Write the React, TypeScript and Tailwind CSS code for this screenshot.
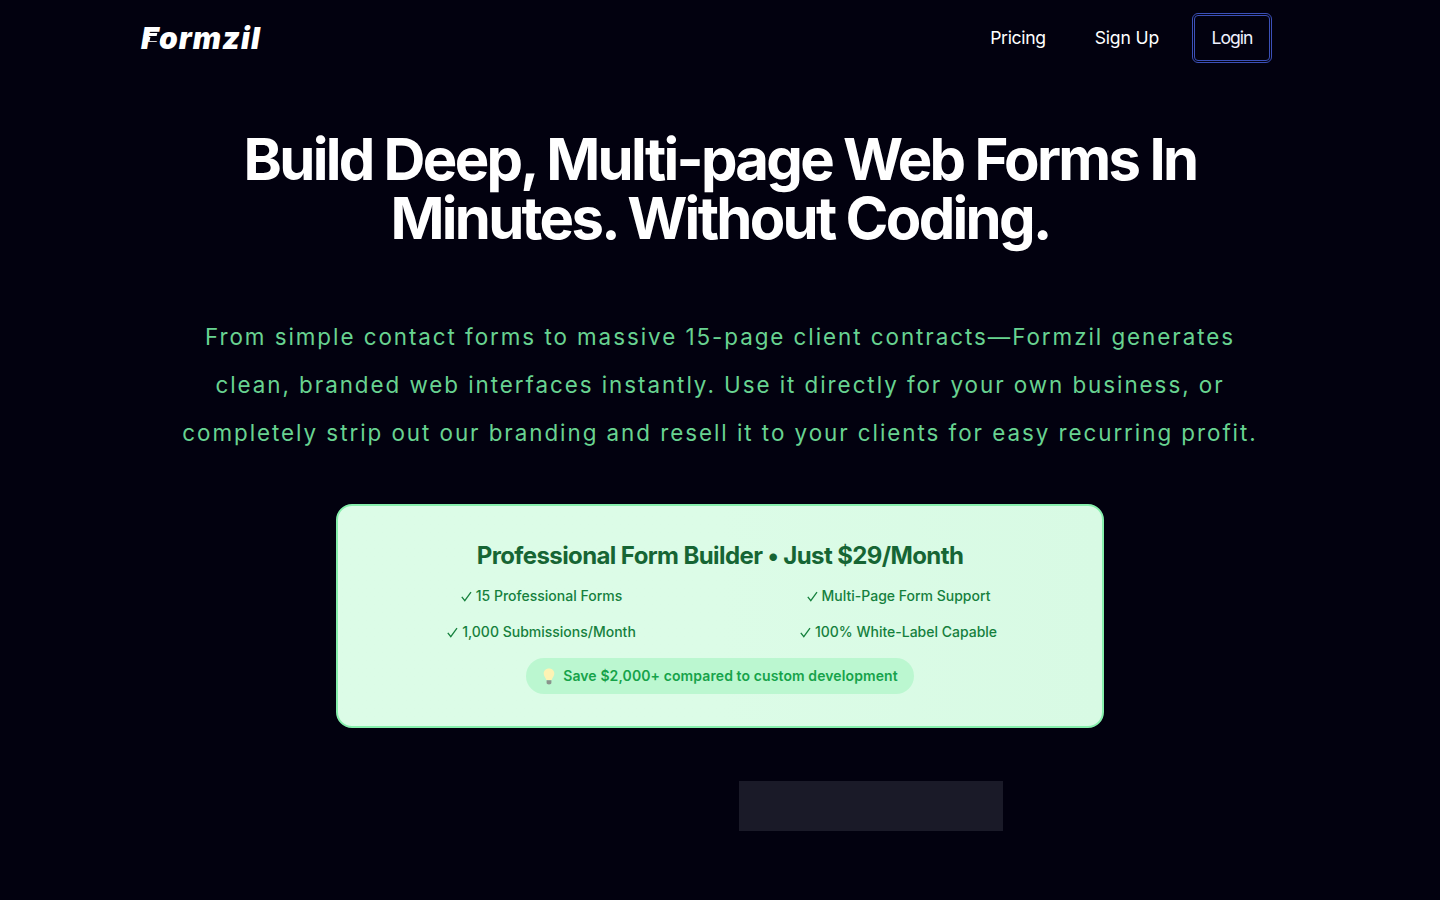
const features = [
  "15 Professional Forms",
  "Multi-Page Form Support",
  "1,000 Submissions/Month",
  "100% White-Label Capable",
];

function Check() {
  return (
    <svg width="11" height="11" viewBox="0 0 11 11" className="mr-1 shrink-0" fill="none" stroke="currentColor" strokeWidth="1.3">
      <path d="M.8 5.8 3.8 9.6 10 1.2" />
    </svg>
  );
}

function Bulb() {
  return (
    <svg width="14" height="17" viewBox="0 0 14 17" className="shrink-0">
      <path d="M7 .5C3.9.5 1.7 2.8 1.7 5.6c0 2.5 1.9 3.8 2.6 6.4h5.4c.7-2.6 2.6-3.9 2.6-6.4C12.3 2.8 10.1.5 7 .5z" fill="#fdf3b4" />
      <path d="M4.6 12.2h4.8v2.6c0 1.1-1 1.7-2.4 1.7s-2.4-.6-2.4-1.7z" fill="#8a948c" />
    </svg>
  );
}

export default function App() {
  return (
    <div className="min-h-[900px] bg-[#02010f] font-['Inter',sans-serif] text-white">
      <header className="ml-[141px] flex w-[1131px] items-center justify-between pt-[13px]">
        <a href="#" className="relative text-[30px] leading-[50px] font-black tracking-[1.05px] italic">
          Formzil
          {/* speed line through the F */}
          <span className="absolute top-[20px] left-[3px] h-[3px] w-[13px] -skew-x-12 bg-white" />
          <span className="absolute top-[24px] left-[9px] h-[4px] w-[10px] -skew-x-12 bg-[#02010f]" />
        </a>
        <nav className="flex items-center text-[17.6px] tracking-[-0.01em]">
          <a href="#" className="tracking-[-0.02em]">Pricing</a>
          <a href="#" className="ml-[49px]">Sign Up</a>
          <button
            type="button"
            className="ml-[33px] h-[50px] w-[80px] rounded-md border border-[#3b50b8] tracking-[-1px] text-[#eef0ff] outline outline-[#3b50b8] outline-offset-[-3px]"
          >
            Login
          </button>
        </nav>
      </header>

      <main className="flex flex-col items-center">
        <h1 className="mt-[67px] w-[1000px] text-center text-[58px] leading-[59px] font-bold tracking-[-2.7px]">
          Build Deep, Multi-page Web Forms In Minutes. Without Coding.
        </h1>
        <p className="mt-[65px] w-[1100px] text-center text-[22.4px] leading-[48px] tracking-[1.95px] text-[#68d391]">
          From simple contact forms to massive 15-page client contracts—Formzil generates clean, branded web interfaces instantly. Use it directly for your own business, or completely strip out our branding and resell it to your clients for easy recurring profit.
        </p>

        <section className="mt-[47px] h-[224px] w-[768px] rounded-2xl border-2 border-[#86efac] bg-gradient-to-r from-[#dcfce7] via-[#dcfce7] to-[#d8fae4] pt-[34px] text-center">
          <h2 className="text-2xl leading-8 font-bold tracking-[-0.6px] text-[#166534]">
            Professional Form Builder • Just $29/Month
          </h2>
          <ul className="mt-[6px] grid grid-cols-2 px-[25px] text-sm font-medium text-[#15803d]">
            {features.map((f) => (
              <li key={f} className="flex h-9 items-center justify-center">
                <Check />
                {f}
              </li>
            ))}
          </ul>
          <div className="mt-[8px] inline-flex h-9 items-center gap-[7px] rounded-full bg-[#bbf7d0] px-[16px] text-sm font-semibold tracking-[0.1px] text-[#16a34a]">
            <Bulb />
            Save $2,000+ compared to custom development
          </div>
        </section>

        <div className="mt-[53px] flex justify-center gap-4">
          <div className="h-[50px] w-[286px]" />
          <div className="h-[50px] w-[264px] bg-[#1a1a28]" />
        </div>
      </main>
    </div>
  );
}
